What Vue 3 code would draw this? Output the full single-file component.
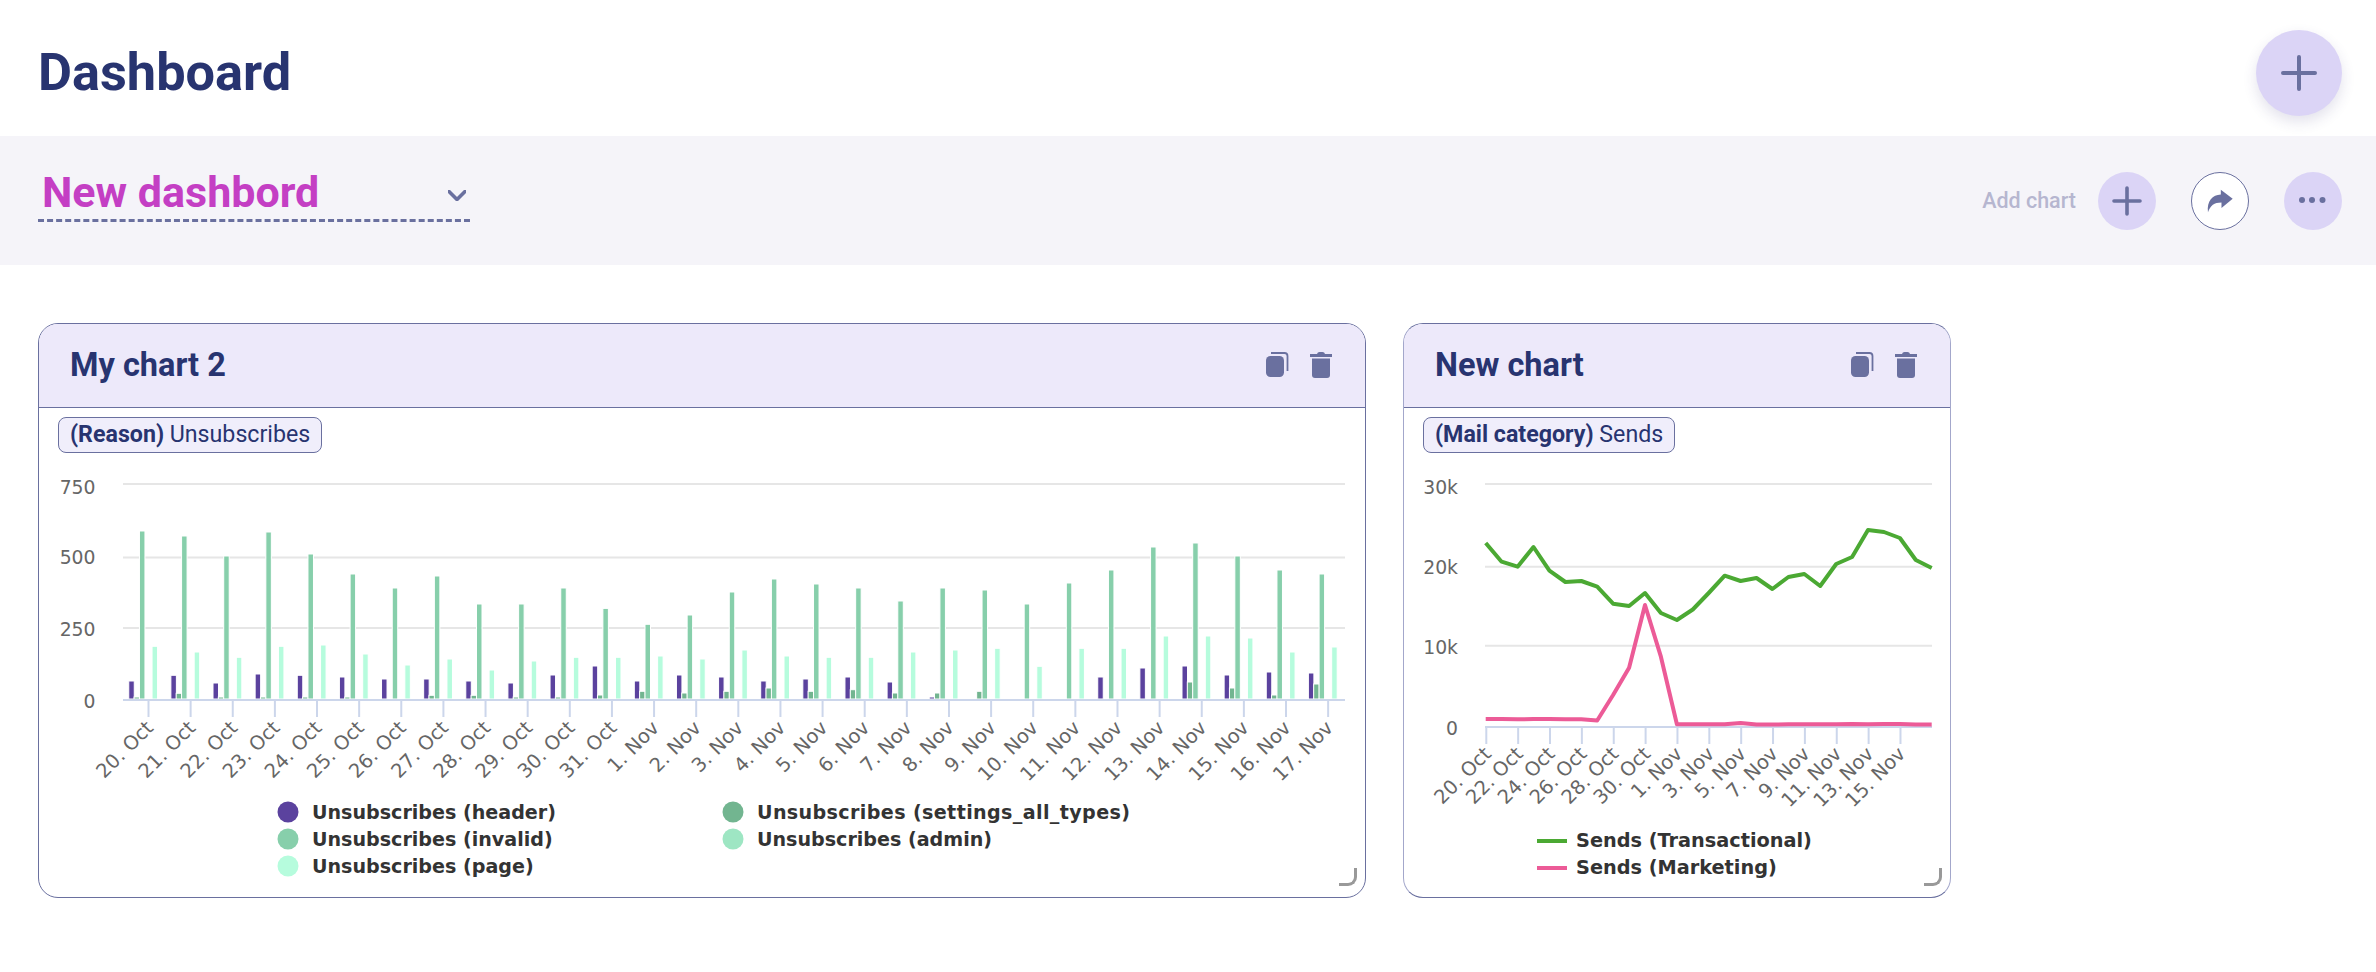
<script setup>
const tick1 = (i) => 148.5 + 42.13 * i
const labels1 = []
for (let d = 20; d <= 31; d++) labels1.push(d + '. Oct')
for (let d = 1; d <= 17; d++) labels1.push(d + '. Nov')

const header = [18, 23.7, 16, 25, 23.7, 22, 20, 20, 18, 16, 24, 33, 18, 24, 22, 18, 20, 22, 17, 2, 0, 0, 0, 22, 31, 33, 24, 27, 26]
const settings = [2, 5.7, 2, 2, 2, 2, 0, 3.7, 3.7, 2, 2, 4, 7.7, 6, 7.7, 11, 7.7, 9.3, 6, 6, 7.7, 0, 0, 0, 0, 17, 11, 4, 15]
const invalid = [168, 163, 143, 167, 145, 125, 111, 123, 95, 95, 111, 90.6, 74.7, 84, 107, 120, 115, 111, 98, 111, 109, 95, 116, 129, 152, 156, 143, 129, 125]
const page = [52.7, 47, 41.7, 52.7, 54, 45, 34, 40, 29, 38, 41.7, 41.7, 43, 40, 49, 43, 41.7, 41.7, 47, 49, 50.7, 32.7, 50.7, 50.7, 63, 63, 61, 47, 52]
const base1 = 699
const series1 = [
  { off: -17, color: '#5b429e', data: header },
  { off: -11.7, color: '#72b590', data: settings },
  { off: -6.3, color: '#87cfab', data: invalid },
  { off: 6.3, color: '#b6fcdd', data: page }
]
const bars = []
series1.forEach((s) => {
  s.data.forEach((h, i) => {
    if (h > 0) bars.push({ x: tick1(i) + s.off - 2.75, y: base1 - h, h, color: s.color })
  })
})
const grid1 = [484, 557.5, 628]
const yLabels1 = [
  { t: '750', y: 494 },
  { t: '500', y: 564 },
  { t: '250', y: 636 },
  { t: '0', y: 708 }
]
const legend1 = [
  { t: 'Unsubscribes (header)', x: 288, y: 812, color: '#5b429e' },
  { t: 'Unsubscribes (invalid)', x: 288, y: 839, color: '#87cfab' },
  { t: 'Unsubscribes (page)', x: 288, y: 866, color: '#b6fcdd' },
  { t: 'Unsubscribes (settings_all_types)', x: 733, y: 812, color: '#72b590', wide: true },
  { t: 'Unsubscribes (admin)', x: 733, y: 839, color: '#9ee6c3' }
]

const px2 = (i) => 1485.7 + 15.93 * i
const green = [543, 561.7, 566.7, 547, 570.7, 582, 581, 586.7, 603.7, 606, 593, 613, 620, 609.5, 593, 575.7, 581, 578, 589, 577, 574, 586, 564, 557, 530, 532, 538, 560, 568]
const pink = [719, 719, 719.3, 719, 719, 719.3, 719.3, 720.5, 695, 667.7, 605, 656.7, 724.3, 724.3, 724.3, 724.3, 723, 724.5, 724.5, 724.3, 724.3, 724.3, 724.2, 724, 724.2, 724, 724, 724.5, 724.5]
const toPts = (arr) => arr.map((y, i) => px2(i).toFixed(1) + ',' + y).join(' ')
const greenPts = toPts(green)
const pinkPts = toPts(pink)
const grid2 = [484, 566.7, 645.7]
const yLabels2 = [
  { t: '30k', y: 494 },
  { t: '20k', y: 574 },
  { t: '10k', y: 654 },
  { t: '0', y: 735 }
]
const labels2 = ['20. Oct', '22. Oct', '24. Oct', '26. Oct', '28. Oct', '30. Oct', '1. Nov', '3. Nov', '5. Nov', '7. Nov', '9. Nov', '11. Nov', '13. Nov', '15. Nov']
const tick2 = (i) => 1486.3 + 31.86 * i
</script>

<template>
  <div class="page">
    <header class="top">
      <h1 class="title">Dashboard</h1>
      <button class="fab">
        <svg width="36" height="36" viewBox="0 0 36 36"><path d="M18 2V34M2 18H34" class="plus" stroke-width="4" /></svg>
      </button>
    </header>

    <section class="band">
      <div class="select">
        <span class="select-text">New dashbord</span>
        <svg class="chev" width="18" height="11" viewBox="0 0 18 11"><path d="M1 1.500L9 9.500L17 1.500" class="plus" stroke-width="3.600" stroke-linecap="butt" /></svg>
      </div>
      <div class="actions">
        <span class="add-label">Add chart</span>
        <button class="round">
          <svg width="30" height="30" viewBox="0 0 30 30"><path d="M15 2V28M2 15H28" class="plus" stroke-width="3.6" /></svg>
        </button>
        <button class="round outline">
          <svg width="28" height="27" viewBox="915 560 85 80"><path d="M960 567L996 595L962 623V606C940 606 928 615 921 636C917 602 935 583 960 582Z" class="fill" /></svg>
        </button>
        <button class="round">
          <svg width="30" height="12" viewBox="0 0 30 12"><circle cx="4" cy="5" r="3" class="fill" /><circle cx="14" cy="5" r="3" class="fill" /><circle cx="24.500" cy="5" r="3" class="fill" /></svg>
        </button>
      </div>
    </section>

    <main class="cards">
      <article class="card card-a">
        <div class="card-head">
          <h2 class="card-title">My chart 2</h2>
          <div class="card-icons">
            <svg width="23" height="27" viewBox="0 0 23 27"><rect x="0" y="5" width="18" height="21" rx="4.500" class="fill" /><path d="M5 2H18.500Q21.500 2 21.500 5V20" class="line" stroke-width="1.800" /></svg>
            <svg width="22" height="27" viewBox="0 0 22 27"><path d="M0 3H7Q7.500 1 9.500 1H12.500Q14.500 1 15 3H22V6H0Z" class="fill" /><path d="M2 7.500H20V24Q20 27 17 27H5Q2 27 2 24Z" class="fill" /></svg>
          </div>
        </div>
        <div class="card-body">
          <div class="tag"><b>(Reason)</b> Unsubscribes</div>
          <svg class="chart" width="1328" height="438" viewBox="38 460 1328 438">
            <line v-for="g in grid1" :key="g" x1="123" x2="1345" :y1="g" :y2="g" class="gridline" />
            <text v-for="l in yLabels1" :key="l.t" x="95.500" :y="l.y" class="ylabel">{{ l.t }}</text>
            <line v-for="(l, i) in labels1" :key="'t' + i" :x1="tick1(i)" :x2="tick1(i)" y1="700" y2="717" class="axis" />
            <rect v-for="(b, i) in bars" :key="'b' + i" :x="b.x" :y="b.y" width="5.500" :height="b.h" :fill="b.color" stroke="#fff" stroke-width="1" />
            <line x1="123" x2="1345" y1="700" y2="700" class="axis" />
            <text v-for="(l, i) in labels1" :key="'x' + i" :transform="`translate(${tick1(i) + 6} 729) rotate(-45)`" class="xlabel">{{ l }}</text>
            <g v-for="l in legend1" :key="l.t">
              <circle :cx="l.x" :cy="l.y" r="10.500" :fill="l.color" />
              <text :x="l.x + 24" :y="l.y + 7" class="legend" :class="{ wide: l.wide }">{{ l.t }}</text>
            </g>
          </svg>
          <span class="grip"></span>
        </div>
      </article>

      <article class="card card-b">
        <div class="card-head">
          <h2 class="card-title">New chart</h2>
          <div class="card-icons">
            <svg width="23" height="27" viewBox="0 0 23 27"><rect x="0" y="5" width="18" height="21" rx="4.500" class="fill" /><path d="M5 2H18.500Q21.500 2 21.500 5V20" class="line" stroke-width="1.800" /></svg>
            <svg width="22" height="27" viewBox="0 0 22 27"><path d="M0 3H7Q7.500 1 9.500 1H12.500Q14.500 1 15 3H22V6H0Z" class="fill" /><path d="M2 7.500H20V24Q20 27 17 27H5Q2 27 2 24Z" class="fill" /></svg>
          </div>
        </div>
        <div class="card-body">
          <div class="tag"><b>(Mail category)</b> Sends</div>
          <svg class="chart" width="548" height="438" viewBox="1403 460 548 438">
            <line v-for="g in grid2" :key="g" x1="1485" x2="1932" :y1="g" :y2="g" class="gridline" />
            <text v-for="l in yLabels2" :key="l.t" x="1458" :y="l.y" class="ylabel">{{ l.t }}</text>
            <line v-for="(l, i) in labels2" :key="'t' + i" :x1="tick2(i)" :x2="tick2(i)" y1="727" y2="744" class="axis" />
            <line x1="1485" x2="1932" y1="727" y2="727" class="axis" />
            <polyline :points="greenPts" fill="none" stroke="#4ba933" stroke-width="4" stroke-linejoin="round" />
            <polyline :points="pinkPts" fill="none" stroke="#ec5b97" stroke-width="4" stroke-linejoin="round" />
            <text v-for="(l, i) in labels2" :key="'x' + i" :transform="`translate(${tick2(i) + 6} 755) rotate(-45)`" class="xlabel">{{ l }}</text>
            <line x1="1537" x2="1567" y1="841" y2="841" stroke="#4ba933" stroke-width="4" />
            <text x="1576" y="847" class="legend sends">Sends (Transactional)</text>
            <line x1="1537" x2="1567" y1="868" y2="868" stroke="#ec5b97" stroke-width="4" />
            <text x="1576" y="874" class="legend sends">Sends (Marketing)</text>
          </svg>
          <span class="grip"></span>
        </div>
      </article>
    </main>
  </div>
</template>

<style>
html, body { margin: 0; background: #fff; }
</style>

<style scoped>
.page { width: 2376px; height: 972px; overflow: hidden; font-family: Roboto, sans-serif; color: #283470; background: #fff; }
.top { height: 136px; box-sizing: border-box; padding: 0 34px 0 38px; display: flex; align-items: center; justify-content: space-between; }
.title { margin: 8px 0 0; font-size: 52.300px; line-height: 60px; font-weight: 700; color: #283470; }
.fab { width: 86px; height: 86px; margin-top: 10px; border: 0; padding: 0; border-radius: 50%; background: #dbd4f6; box-shadow: 0 6px 14px rgba(60, 50, 120, 0.14); display: flex; align-items: center; justify-content: center; }
.plus { fill: none; stroke: #6a709f; stroke-linecap: round; }
.fill { fill: #6a709f; }
.line { fill: none; stroke: #6a709f; }

.band { height: 129px; box-sizing: border-box; background: #f5f4f9; padding: 0 34px 0 38px; display: flex; align-items: flex-start; justify-content: space-between; }
.select { width: 432px; margin-top: 31px; box-sizing: border-box; padding: 0 4px 2px 4px; border-bottom: 3px dashed #6a709f; display: flex; align-items: center; justify-content: space-between; }
.select-text { font-size: 43px; line-height: 50px; font-weight: 700; color: #c43fc4; }
.chev { margin-top: 6px; }
.actions { height: 129px; display: flex; align-items: center; gap: 35px; }
.add-label { margin-right: -13px; font-size: 21.500px; font-weight: 500; color: #b6b6d0; }
.round { width: 58px; height: 58px; border: 0; padding: 0; border-radius: 50%; background: #dbd4f6; display: flex; align-items: center; justify-content: center; }
.round.outline { background: #fff; border: 1px solid #6a709f; box-sizing: border-box; }

.cards { display: flex; gap: 37px; padding: 58px 0 0 38px; }
.card { height: 575px; box-sizing: border-box; border: 1.500px solid #6a709f; border-radius: 20px; overflow: hidden; background: #fff; display: flex; flex-direction: column; }
.card-a { width: 1328px; }
.card-b { width: 548px; border-left-color: #a3a7cb; border-right-color: #a3a7cb; border-bottom-color: #6a709f; }
.card-head { height: 84px; flex: none; box-sizing: border-box; background: #ede9fa; border-bottom: 1.500px solid #6a709f; padding: 0 33px 3px 31px; display: flex; align-items: center; justify-content: space-between; }
.card-title { margin: 2px 0 0; font-size: 32.500px; font-weight: 700; color: #283470; }
.card-icons { display: flex; gap: 21px; align-items: center; }
.card-body { position: relative; flex: 1; min-height: 0; }
.tag { position: relative; z-index: 1; display: inline-block; box-sizing: border-box; height: 36px; margin: 9px 0 0 19px; padding: 0 11px; line-height: 33px; font-size: 23.200px; border: 1px solid #6a709f; border-radius: 8px; background: #f0eefb; color: #283470; white-space: nowrap; vertical-align: top; }
.tag b { font-weight: 700; }
.chart { position: absolute; left: -1.500px; top: 52px; display: block; }
.gridline { stroke: #e6e6e6; stroke-width: 2; }
.axis { stroke: #ccd6eb; stroke-width: 2; }
.ylabel { font-family: "DejaVu Sans", sans-serif; font-size: 18.800px; fill: #666; text-anchor: end; }
.xlabel { font-family: "DejaVu Sans", sans-serif; font-size: 19.500px; fill: #666; text-anchor: end; }
.legend { font-family: "DejaVu Sans", sans-serif; font-size: 19.100px; font-weight: 700; fill: #333; }
.legend.sends { font-size: 19.300px; }
.legend.wide { letter-spacing: 0.38px; }
.grip { position: absolute; right: 8px; bottom: 11px; width: 18px; height: 18px; box-sizing: border-box; border-right: 3px solid #999; border-bottom: 3px solid #999; border-bottom-right-radius: 9px; }
</style>
